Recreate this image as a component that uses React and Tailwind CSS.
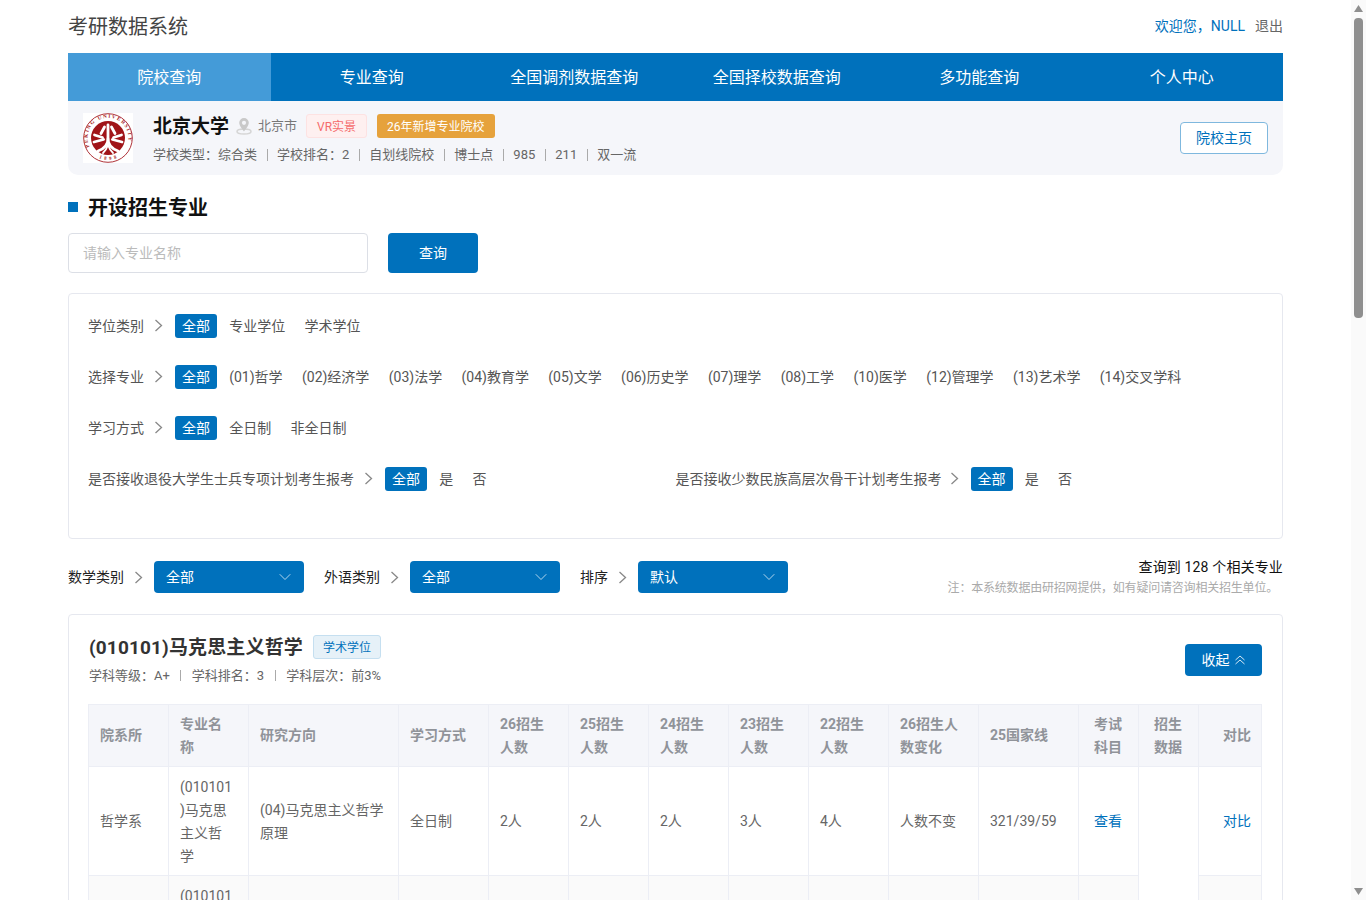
import { ChevronDown } from "lucide-react";

const navItems = ["院校查询", "专业查询", "全国调剂数据查询", "全国择校数据查询", "多功能查询", "个人中心"];
const schoolMeta = ["学校类型：综合类", "学校排名：2", "自划线院校", "博士点", "985", "211", "双一流"];
const majors = ["(01)哲学", "(02)经济学", "(03)法学", "(04)教育学", "(05)文学", "(06)历史学", "(07)理学", "(08)工学", "(10)医学", "(12)管理学", "(13)艺术学", "(14)交叉学科"];
const subjectMeta = ["学科等级：A+", "学科排名：3", "学科层次：前3%"];

const columns = [
  { label: "院系所", width: "w-[80px]" },
  { label: "专业名称", width: "w-[80px]" },
  { label: "研究方向", width: "w-[150px]" },
  { label: "学习方式", width: "w-[90px]" },
  { label: "26招生人数", width: "w-[80px]" },
  { label: "25招生人数", width: "w-[80px]" },
  { label: "24招生人数", width: "w-[80px]" },
  { label: "23招生人数", width: "w-[80px]" },
  { label: "22招生人数", width: "w-[80px]" },
  { label: "26招生人数变化", width: "w-[90px]" },
  { label: "25国家线", width: "w-[100px]" },
  { label: "考试科目", width: "w-[60px]", narrow: true },
  { label: "招生数据", width: "w-[60px]", narrow: true },
  { label: "对比", width: "w-[63px]", last: true },
];

const rows = [
  { dir: "(04)马克思主义哲学原理", counts: ["2人", "2人", "2人", "3人", "4人"], change: "人数不变" },
  { dir: "(01)马克思主义哲学史", counts: ["1人", "1人", "2人", "2人", "3人"], change: "人数不变" },
];

function PekingLogo() {
  return (
    <svg viewBox="0 0 50 50" className="h-[50px] w-[50px] shrink-0 bg-white">
      <defs>
        <path id="ring-top" d="M6.500 34 A20.500 20.500 0 1 1 43.500 34" />
        <path id="ring-bottom" d="M16 45 A22 22 0 0 0 34 45" />
      </defs>
      <circle cx="25" cy="25" r="24.300" fill="none" stroke="#a61c22" strokeWidth="0.900" />
      <circle cx="25" cy="25" r="17" fill="#a01418" />
      <text fontSize="5.200" fontWeight="700" fill="#a61c22" fontFamily="'Liberation Serif', serif">
        <textPath href="#ring-top" textLength="76" lengthAdjust="spacing">PEKING UNIVERSITY</textPath>
      </text>
      <text fontSize="4.800" fontWeight="700" fill="#a61c22" fontFamily="'Liberation Serif', serif">
        <textPath href="#ring-bottom" textLength="18" lengthAdjust="spacing">1898</textPath>
      </text>
      <g fill="none" stroke="#fff" strokeWidth="2.800" strokeLinecap="round">
        <path d="M25 12v13" />
        <path d="M21.500 14 18 20.500" />
        <path d="M28.500 14 32 20.500" />
        <path d="M11.500 22 19.500 24.500" />
        <path d="M38.500 22 30.500 24.500" />
        <path d="M11 29 20.500 26.500" />
        <path d="M39 29 29.500 26.500" />
        <path d="M25 26c0 6-4.500 10-10 12" />
        <path d="M25 26c0 6 4.500 10 10 12" />
        <path d="M25 32c-1 3-3 6-5 8" strokeWidth="1.800" />
        <path d="M25 32c1 3 3 6 5 8" strokeWidth="1.800" />
      </g>
    </svg>
  );
}

function PinIcon() {
  return (
    <svg viewBox="0 0 16 18" className="h-[18px] w-[16px] shrink-0">
      <ellipse cx="8" cy="14.500" rx="7" ry="2.500" fill="none" stroke="#d5d5d5" strokeWidth="1.500" />
      <path d="M8 1a4.800 4.800 0 0 0-4.800 4.800C3.200 9 8 14.500 8 14.500s4.800-5.500 4.800-8.700A4.800 4.800 0 0 0 8 1z" fill="#c9c9c9" />
      <circle cx="8" cy="5.800" r="2.100" fill="#f5f6fa" />
    </svg>
  );
}

function Arrow({ className }) {
  return (
    <svg viewBox="0 0 9 13" className={`h-[13px] w-[9px] shrink-0 ${className}`}>
      <polyline points="1.500,1 7.500,6.500 1.500,12" fill="none" stroke="#888" strokeWidth="1.300" />
    </svg>
  );
}

function FilterRow({ label, options, compact }) {
  return (
    <div className="flex h-[51px] items-center">
      <span className="pt-px text-[14px] text-[#555]">{label}</span>
      <Arrow className={compact ? "ml-[8px]" : "ml-[10px]"} />
      <div className="ml-[12px] flex items-center gap-[5px]">
        <span className="flex h-[24px] items-center rounded-[3px] bg-[#0071bc] px-[7px] pt-px text-[14px] text-white">全部</span>
        {options.map((option) => (
          <span key={option} className="px-[7.2px] pt-px text-[14px] text-[#555]">{option}</span>
        ))}
      </div>
    </div>
  );
}

function SelectField({ label, value }) {
  return (
    <div className="flex items-center">
      <span className="text-[14px] text-[#222]">{label}</span>
      <Arrow className="ml-[10px]" />
      <div className="ml-[11px] flex h-[32px] w-[150px] items-center justify-between rounded-[4px] bg-[#0071bc] pl-[12px] pr-[9px] text-[14px] text-white">
        <span>{value}</span>
        <ChevronDown size={20} strokeWidth={1} className="text-[#d5e8f5]" />
      </div>
    </div>
  );
}

function DataRow({ row, first, total }) {
  const cell = "border border-[#eceef5] px-[11px] pb-[7px] pt-[9px] align-middle";
  return (
    <tr className={first ? "bg-white" : "bg-[#fafafa]"}>
      <td className={cell}>哲学系</td>
      <td className="break-all border border-[#eceef5] pb-[7px] pl-[11px] pr-[13px] pt-[9px] align-middle [line-break:anywhere]">(010101)马克思主义哲学</td>
      <td className={cell}>{row.dir}</td>
      <td className={cell}>全日制</td>
      {row.counts.map((count, i) => (
        <td key={i} className={cell}>{count}</td>
      ))}
      <td className={cell}>{row.change}</td>
      <td className={cell}>321/39/59</td>
      <td className="border border-[#eceef5] px-[15px] pb-[7px] pt-[9px] align-middle text-[#0071bc]">查看</td>
      {first && <td rowSpan={total} className="border border-[#eceef5] bg-white" />}
      <td className="border border-[#eceef5] pb-[7px] pr-[10px] pt-[9px] text-right align-middle text-[#0071bc]">对比</td>
    </tr>
  );
}

function PageScrollbar() {
  return (
    <aside className="flex h-screen w-[15px] shrink-0 flex-col items-center bg-[#fafafa]">
      <svg viewBox="0 0 9 7" className="mt-[5px] h-[7px] w-[9px] shrink-0"><path d="M4.500 0 9 7H0z" fill="#8f8f8f" /></svg>
      <div className="mt-[6px] h-[300px] w-[9px] rounded-[4px] bg-[#8f8f8f]" />
      <svg viewBox="0 0 9 7" className="mb-[5px] mt-auto h-[7px] w-[9px] shrink-0"><path d="M4.500 7 9 0H0z" fill="#8f8f8f" /></svg>
    </aside>
  );
}

export default function App() {
  return (
    <div className="flex h-screen overflow-hidden bg-white font-['Roboto','Noto_Sans_CJK_SC',sans-serif] text-[14px] text-[#555]">
      <main className="min-w-0 flex-1">
        <div className="mx-auto w-[1215px] pb-[40px]">
          {/* Top bar */}
          <header className="flex h-[53px] items-center justify-between">
            <h1 className="text-[20px] font-normal text-[#444]">考研数据系统</h1>
            <div className="flex gap-[10px] text-[14px]">
              <span className="text-[#0071bc]">欢迎您，NULL</span>
              <span className="text-[#666]">退出</span>
            </div>
          </header>

          <nav className="grid h-[48px] grid-cols-6 bg-[#0071bc] text-[16px] text-white">
            {navItems.map((item, i) => (
              <a key={item} href="#" className={`flex items-center justify-center pt-px ${i === 0 ? "bg-[#449bd8]" : ""}`}>
                {item}
              </a>
            ))}
          </nav>

          {/* School info */}
          <section className="flex h-[74px] items-center rounded-b-[10px] bg-[#f5f6fa] px-[15px]">
            <PekingLogo />
            <div className="ml-[20px] mt-[2px] flex-1">
              <div className="flex h-[24px] items-center">
                <strong className="pt-[3px] text-[19px] font-bold text-[#111]">北京大学</strong>
                <span className="ml-[7px]"><PinIcon /></span>
                <span className="ml-[6px] text-[13px] text-[#777]">北京市</span>
                <span className="ml-[9px] flex h-[24px] items-center rounded-[3px] border border-[#fde2e2] bg-[#fef0f0] px-[10px] pt-[2px] text-[12px] text-[#f56c6c]">VR实景</span>
                <span className="ml-[10px] flex h-[24px] items-center rounded-[3px] bg-[#e6a23c] px-[10px] pt-[2px] text-[12px] text-white">26年新增专业院校</span>
              </div>
              <div className="mt-[7px] flex items-center text-[13px] text-[#666]">
                {schoolMeta.map((item, i) => (
                  <span key={item} className="flex items-center">
                    {i > 0 && <span className="mx-[9.500px] h-[12px] w-px bg-[#aaa]" />}
                    {item}
                  </span>
                ))}
              </div>
            </div>
            <a href="#" className="flex h-[32px] w-[88px] items-center justify-center rounded-[4px] border border-[#7fb8de] bg-white text-[14px] text-[#0071bc]">院校主页</a>
          </section>

          {/* Search */}
          <div className="mt-[20px] flex h-[24px] items-center">
            <span className="h-[10px] w-[10px] bg-[#0071bc]" />
            <h2 className="ml-[10px] pt-px text-[20px] font-bold text-[#111]">开设招生专业</h2>
          </div>
          <div className="mt-[14px] flex gap-[20px]">
            <input placeholder="请输入专业名称" className="h-[40px] w-[300px] rounded-[4px] border border-[#dcdfe6] px-[14px] text-[14px] placeholder:text-[#bbb]" />
            <button type="button" className="h-[40px] w-[90px] rounded-[4px] bg-[#0071bc] text-[14px] text-white">查询</button>
          </div>

          {/* Filters */}
          <section className="mt-[20px] h-[246px] rounded-[4px] border border-[#e6e8ef] px-[19px] pt-[6px]">
            <FilterRow label="学位类别" options={["专业学位", "学术学位"]} />
            <FilterRow label="选择专业" options={majors} />
            <FilterRow label="学习方式" options={["全日制", "非全日制"]} />
            <div className="grid grid-cols-2">
              <FilterRow label="是否接收退役大学生士兵专项计划考生报考" options={["是", "否"]} />
              <FilterRow label="是否接收少数民族高层次骨干计划考生报考" options={["是", "否"]} compact />
            </div>
          </section>

          {/* Selects and total */}
          <div className="mt-[20px] flex h-[36px] items-center justify-between">
            <div className="flex items-center gap-[20px]">
              <SelectField label="数学类别" value="全部" />
              <SelectField label="外语类别" value="全部" />
              <SelectField label="排序" value="默认" />
            </div>
            <div className="text-right">
              <p className="text-[14px] leading-[20px] tracking-[0.15px] text-[#111]">查询到 128 个相关专业</p>
              <p className="pr-[5px] pt-px text-[12px] leading-[20px] tracking-[-0.2px] text-[#aaa]">注：本系统数据由研招网提供，如有疑问请咨询相关招生单位。</p>
            </div>
          </div>

          {/* Major card */}
          <section className="mt-[19px] rounded-[4px] border border-[#e6e8ef] px-[20px] py-[20px]">
            <div className="flex items-start justify-between">
              <div>
                <div className="flex h-[24px] items-center">
                  <h3 className="pt-[2px] text-[19px] font-bold tracking-[0.15px] text-[#333]">(010101)马克思主义哲学</h3>
                  <span className="ml-[10px] flex h-[24px] items-center rounded-[3px] border border-[#c5dff0] bg-[#e6f1f8] px-[9px] pt-px text-[12px] text-[#0071bc]">学术学位</span>
                </div>
                <div className="mt-[7px] flex items-center text-[13px] text-[#666]">
                  {subjectMeta.map((item, i) => (
                    <span key={item} className="flex items-center">
                      {i > 0 && <span className="mx-[10.500px] h-[11px] w-px bg-[#aaa]" />}
                      {item}
                    </span>
                  ))}
                </div>
              </div>
              <button type="button" className="mt-[9px] flex h-[32px] w-[77px] items-center justify-center gap-[4px] rounded-[4px] bg-[#0071bc] text-[14px] text-white">
                收起
                <svg viewBox="0 0 12 10" className="h-[10px] w-[12px]">
                  <path d="M1.500 5 6 1l4.500 4M1.500 9 6 5l4.500 4" fill="none" stroke="#d5e8f5" strokeWidth="1" />
                </svg>
              </button>
            </div>

            <table className="-ml-px mt-[18px] w-[1173px] table-fixed border-collapse text-[14px] leading-[23px] text-[#666]">
              <thead>
                <tr className="bg-[#f5f6fa]">
                  {columns.map((col) => (
                    <th
                      key={col.label}
                      className={`${col.width} border border-[#eceef5] pb-[7px] pt-[8px] font-bold text-[#909399] ${
                        col.last ? "pr-[10px] text-right" : col.narrow ? "px-[15px] text-left" : "pl-[11px] pr-[13px] text-left"
                      }`}
                    >
                      {col.label}
                    </th>
                  ))}
                </tr>
              </thead>
              <tbody>
                {rows.map((row, i) => (
                  <DataRow key={row.dir} row={row} first={i === 0} total={rows.length} />
                ))}
              </tbody>
            </table>
          </section>
        </div>
      </main>
      <PageScrollbar />
    </div>
  );
}
